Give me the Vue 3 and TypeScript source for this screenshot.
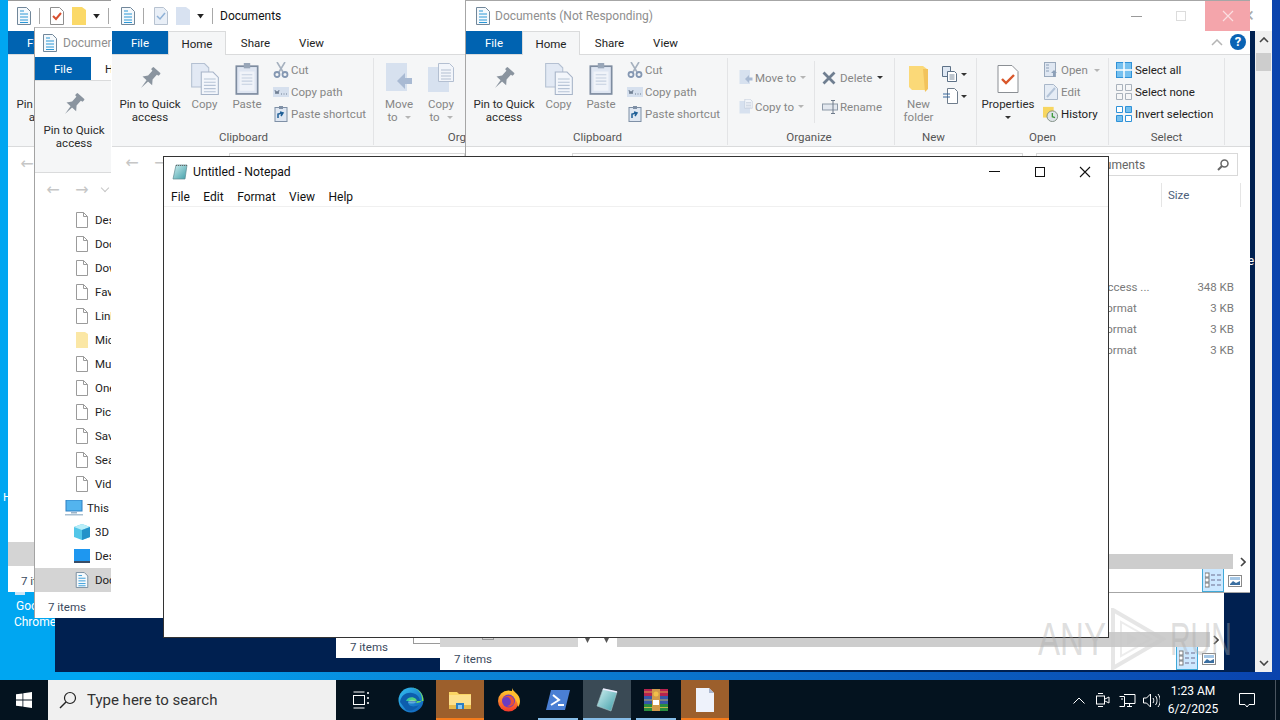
<script setup lang="ts">
type Row = { icon: string; label: string };

const clipRows: Row[] = [
  { icon: 'cut', label: 'Cut' },
  { icon: 'path', label: 'Copy path' },
  { icon: 'shortcut', label: 'Paste shortcut' },
];
const openRows: Row[] = [
  { icon: 'open', label: 'Open' },
  { icon: 'edit', label: 'Edit' },
  { icon: 'history', label: 'History' },
];
const selectRows: Row[] = [
  { icon: 'selall', label: 'Select all' },
  { icon: 'selnone', label: 'Select none' },
  { icon: 'selinv', label: 'Invert selection' },
];
const navRows = [
  { label: 'Desktop', icon: 'page' },
  { label: 'Documents', icon: 'page' },
  { label: 'Downloads', icon: 'page' },
  { label: 'Favorites', icon: 'page' },
  { label: 'Links', icon: 'page' },
  { label: 'Microsoft', icon: 'yellow' },
  { label: 'Music', icon: 'page' },
  { label: 'OneDrive', icon: 'page' },
  { label: 'Pictures', icon: 'page' },
  { label: 'Saved Games', icon: 'page' },
  { label: 'Searches', icon: 'page' },
  { label: 'Videos', icon: 'page' },
];
const files = [
  { type: 'Access ...', size: '348 KB' },
  { type: 'Format', size: '3 KB' },
  { type: 'Format', size: '3 KB' },
  { type: 'Format', size: '3 KB' },
];
const apps = [
  { icon: 'explorer', state: 'open' },
  { icon: 'firefox', state: '' },
  { icon: 'powershell', state: 'run' },
  { icon: 'notepad', state: 'focus' },
  { icon: 'winrar', state: 'run' },
  { icon: 'blank', state: 'open' },
];
</script>

<template>
  <div class="screen">
    <svg class="defs" width="0" height="0" aria-hidden="true">
      <defs>
        <linearGradient id="edgeA" x1="0" y1="0" x2="1" y2="1">
          <stop offset="0" stop-color="#35c1f1" />
          <stop offset="1" stop-color="#0b58b5" />
        </linearGradient>
        <linearGradient id="edgeB" x1="0" y1="0" x2="1" y2="0">
          <stop offset="0" stop-color="#2ec4a0" />
          <stop offset="1" stop-color="#7ee04e" />
        </linearGradient>
        <linearGradient id="fox" x1="0" y1="0" x2="0" y2="1">
          <stop offset="0" stop-color="#ffcb2d" />
          <stop offset="1" stop-color="#f5372c" />
        </linearGradient>
        <linearGradient id="note" x1="0" y1="0" x2="1" y2="1">
          <stop offset="0" stop-color="#cfeff0" />
          <stop offset="1" stop-color="#3f9ea8" />
        </linearGradient>
      </defs>
      <symbol id="docs" viewBox="0 0 16 18">
        <path d="M1.5.5h9l4 4v13h-13z" fill="#f5f9fc" stroke="#71879a" />
        <path d="M4 4h4M4 7h8M4 10h8M4 13h8M4 15.500h8" stroke="#2a97d6" />
      </symbol>
      <symbol id="check" viewBox="0 0 14 18">
        <path d="M.5.500h9l4 4v13H.500z" fill="#fff" stroke="#8f8f8f" />
        <path d="M3 9l3 3 5-6" fill="none" stroke="#d8502f" stroke-width="2" />
      </symbol>
      <symbol id="checkdim" viewBox="0 0 14 18">
        <path d="M.5.500h9l4 4v13H.500z" fill="#e9eff7" stroke="#b7c2d0" />
        <path d="M3 9l3 3 5-6" fill="none" stroke="#8fb1d6" stroke-width="1.500" />
      </symbol>
      <symbol id="folderq" viewBox="0 0 14 18">
        <path d="M0 0h10l4 3v15H0z" fill="#fbd968" />
      </symbol>
      <symbol id="folderdim" viewBox="0 0 14 18">
        <path d="M0 0h10l4 3v15H0z" fill="#d8e2f1" />
      </symbol>
      <symbol id="pin" viewBox="0 0 24 24">
        <g transform="rotate(42 12 12)" fill="#8a949f">
          <rect x="7" y="0" width="10" height="3.500" rx="1" />
          <path d="M9 3h6v7l3.500 4.500h-13L9 10z" />
          <path d="M11 14h2l-1 10z" />
        </g>
      </symbol>
      <symbol id="copy" viewBox="0 0 26 30">
        <path d="M.5.500h12l4 4v18H.500z" fill="#e2e9f4" stroke="#b4c0d2" />
        <path d="M9.500 8.500h11l5 5v16h-16z" fill="#f3f6fb" stroke="#a7b4c8" />
        <path d="M12 15h11M12 18h11M12 21h11M12 24h11M12 27h11" stroke="#b6c3d6" />
      </symbol>
      <symbol id="paste" viewBox="0 0 22 30">
        <rect x="1" y="3" width="20" height="26" fill="#dfe6f2" stroke="#7e8ca0" stroke-width="1.600" />
        <rect x="4" y="8" width="14" height="18" fill="#f0f3f9" />
        <path d="M6 11h10M6 14h10M6 17h10M6 20h10" stroke="#c3cfe0" />
        <rect x="8" y="0" width="6" height="5" fill="#98a6b8" />
      </symbol>
      <symbol id="cut" viewBox="0 0 16 16">
        <path d="M4 0l6 10M12 0L6 10" stroke="#a6b1bf" stroke-width="1.600" fill="none" />
        <circle cx="4" cy="12.500" r="2.500" fill="none" stroke="#8497b2" stroke-width="1.800" />
        <circle cx="12" cy="12.500" r="2.500" fill="none" stroke="#8497b2" stroke-width="1.800" />
      </symbol>
      <symbol id="path" viewBox="0 0 16 16">
        <rect x="0" y="3" width="16" height="10" fill="#d6e0ee" />
        <path d="M2 6l1 4 1-3 1 3 1-4M8 10h1M10.500 10h1M13 10h1" stroke="#6f7e92" fill="none" />
      </symbol>
      <symbol id="shortcut" viewBox="0 0 16 16">
        <rect x="2" y="1.500" width="12" height="14" fill="#dfe7f2" stroke="#7f90a6" />
        <rect x="6" y="0" width="4" height="3" fill="#7f90a6" />
        <path d="M5 12V8l5-1M7 6l3 1-2 3" stroke="#1f5f97" stroke-width="1.500" fill="none" />
      </symbol>
      <symbol id="move" viewBox="0 0 26 32">
        <rect x="0" y="0" width="21" height="28" fill="#d7e1ef" />
        <path d="M26 15H19v-5l-8 8 8 8v-5h7z" fill="#a9bad3" />
      </symbol>
      <symbol id="copyto" viewBox="0 0 26 32">
        <rect x="0" y="4" width="21" height="25" fill="#d7e1ef" />
        <path d="M10.500.5h11l4 4v14h-15z" fill="#f2f5fa" stroke="#b3bfd1" />
        <path d="M13 7h10M13 10h10M13 13h10M13 16h10" stroke="#b3bfd1" />
      </symbol>
      <symbol id="del" viewBox="0 0 14 14">
        <path d="M1.500 1.500l11 11M12.500 1.500l-11 11" stroke="#6f7e90" stroke-width="2.800" />
      </symbol>
      <symbol id="rename" viewBox="0 0 16 14">
        <rect x=".5" y="4" width="15" height="6" fill="#e3e8ef" stroke="#8d99a8" />
        <path d="M11 0v14M9 .5h4M9 13.500h4" stroke="#6e7b8b" />
      </symbol>
      <symbol id="newfolder" viewBox="0 0 20 28">
        <path d="M0 0h14l4 3v21H3l-3-3z" fill="#fbd978" />
        <path d="M14 3l5 0v20l-3 3z" fill="#f2c35c" />
      </symbol>
      <symbol id="newitem" viewBox="0 0 18 16">
        <path d="M.5.500h8v10h-8z" fill="#dfe8f3" stroke="#5d7187" />
        <path d="M5.500 5.500h7l2 2v8h-9z" fill="#fff" stroke="#5d7187" />
        <path d="M7.500 9h5M7.500 11h5M7.500 13h5" stroke="#7b8b9c" />
      </symbol>
      <symbol id="easy" viewBox="0 0 18 16">
        <path d="M5.500.500h7l3 3v12h-10z" fill="#fff" stroke="#6f7d8c" />
        <path d="M1 6h7M1 9h7" stroke="#36679b" />
      </symbol>
      <symbol id="props" viewBox="0 0 22 28">
        <path d="M1 .5h14l6 6v21H1z" fill="#fff" stroke="#8b8f94" />
        <path d="M5 14l4 4 8-8" fill="none" stroke="#d9572a" stroke-width="2.400" />
      </symbol>
      <symbol id="open" viewBox="0 0 14 16">
        <rect x=".5" y=".5" width="11" height="14" fill="#dfe7f2" stroke="#9aa9bc" />
        <path d="M2 3h3M2 6h3M2 9h3" stroke="#8da0b8" />
        <path d="M10 8l3 3h-2v4H9v-4H7z" fill="#8da0b8" />
      </symbol>
      <symbol id="edit" viewBox="0 0 14 16">
        <path d="M.5.5h9l4 4v11H.5z" fill="#e5ecf5" stroke="#a9b7c9" />
        <path d="M3 13L11 4" stroke="#b4c4d8" stroke-width="2" />
      </symbol>
      <symbol id="history" viewBox="0 0 18 18">
        <rect x="0" y="1" width="12" height="12" fill="#f7d661" />
        <circle cx="10.500" cy="11.500" r="6" fill="#dde3e8" stroke="#7b8a7f" />
        <path d="M10.500 8v4l3 1" fill="none" stroke="#3f9a3c" stroke-width="1.500" />
      </symbol>
      <symbol id="selall" viewBox="0 0 16 16">
        <rect x=".5" y=".5" width="15" height="15" fill="#75c0ef" stroke="#2f92d8" />
        <path d="M8 0v16M0 8h16" stroke="#fff" stroke-width="1.500" />
      </symbol>
      <symbol id="selnone" viewBox="0 0 16 16">
        <path d="M.5.5h6v6h-6zM9.500.5h6v6h-6zM.5 9.500h6v6h-6zM9.500 9.500h6v6h-6z" fill="none" stroke="#a9b2bc" />
      </symbol>
      <symbol id="selinv" viewBox="0 0 16 16">
        <path d="M.5.5h6v6h-6zM9.500 9.500h6v6h-6z" fill="#fff" stroke="#2f92d8" />
        <path d="M9.500.5h6v6h-6zM.5 9.500h6v6h-6z" fill="#75c0ef" stroke="#2f92d8" />
      </symbol>
      <symbol id="page" viewBox="0 0 12 16">
        <path d="M.5.5h7l4 4v11H.5z" fill="#fff" stroke="#9b9b9b" />
        <path d="M7.500.5v4h4" fill="none" stroke="#9b9b9b" />
      </symbol>
      <symbol id="yellow" viewBox="0 0 12 16">
        <path d="M0 0h9l3 2v14H0z" fill="#fbe7a5" />
      </symbol>
      <symbol id="pc" viewBox="0 0 18 16">
        <rect x="1" y="0" width="16" height="11" fill="#53b4ee" stroke="#2e7fc1" />
        <rect x="6" y="12" width="6" height="1.500" fill="#9cb4c8" />
        <rect x="0" y="14" width="18" height="1.500" fill="#a9c0d2" />
      </symbol>
      <symbol id="cube" viewBox="0 0 16 16">
        <path d="M8 0l8 3v10l-8 3-8-3V3z" fill="#53c6e8" />
        <path d="M8 0l8 3-8 3-8-3z" fill="#b9eef8" />
        <path d="M8 6l8-3v10l-8 3z" fill="#2492c9" />
      </symbol>
      <symbol id="screenb" viewBox="0 0 16 14">
        <rect x="0" y="0" width="16" height="12" fill="#1e97f0" />
        <rect x="0" y="12" width="16" height="2" fill="#3a4d66" />
      </symbol>
      <symbol id="viewlist" viewBox="0 0 16 16">
        <rect x="0" y="1" width="4" height="4" fill="#fff" stroke="#7a7a7a" />
        <rect x="0" y="6" width="4" height="4" fill="#fff" stroke="#7a7a7a" />
        <rect x="0" y="11" width="4" height="4" fill="#fff" stroke="#7a7a7a" />
        <path d="M6 3h4M12 3h4M6 8h4M12 8h4M6 13h4M12 13h4" stroke="#6f6f8f" />
      </symbol>
      <symbol id="viewpic" viewBox="0 0 14 12">
        <rect x=".5" y=".5" width="13" height="11" fill="#fff" stroke="#8a8a8a" />
        <rect x="2" y="2" width="10" height="3" fill="#a5c7e6" />
        <path d="M2 9l3-3 3 2 4-2v4H2z" fill="#3a6ea0" />
      </symbol>
      <symbol id="edge" viewBox="0 0 26 26">
        <circle cx="13" cy="13" r="12.500" fill="url(#edgeA)" />
        <path d="M2 15C3 8 9 5 14 6c6 1 8 5 8 9h-12c0 4 5 6 11 3-3 5-9 7-13 5" fill="#0d5dad" />
        <path d="M25.500 14c0-8-6-13.500-12.500-13.500C18 1 24 5 24 12c0 3-3 4-6 4 1-1 1-3 0-4-3-3-9-2-10 2h16z" fill="url(#edgeB)" />
        <path d="M10 15c1-3 7-3 8 0-1 2-7 2-8 0z" fill="#fff" opacity=".3" />
      </symbol>
      <symbol id="explorer" viewBox="0 0 24 22">
        <path d="M1 3h8l2 2h12v15H1z" fill="#fbd564" />
        <rect x="1" y="6" width="22" height="12" fill="#fde08c" />
        <rect x="1" y="16" width="22" height="4" fill="#e8b94a" />
        <rect x="8" y="14" width="8" height="6" fill="#2c7fc4" />
        <rect x="10" y="16" width="4" height="4" fill="#8ec7ee" />
      </symbol>
      <symbol id="firefox" viewBox="0 0 24 24">
        <circle cx="11.500" cy="13" r="10.500" fill="url(#fox)" />
        <path d="M15 0c1 4 8 6 8 13 0 3-1 5-2 6 0-5-3-9-6-10z" fill="#ffbd2e" />
        <circle cx="11.500" cy="13" r="6.500" fill="#6a3cc2" />
        <path d="M6 11c3-3 6-2 7 0 2 3 0 7-3 7 4 2 8-2 7-6-1-5-8-6-11-1z" fill="#e8513a" />
      </symbol>
      <symbol id="powershell" viewBox="0 0 24 20">
        <path d="M5 0h19l-5 20H0z" fill="#4a7fd4" />
        <path d="M7 5l6 5-8 5" fill="none" stroke="#fff" stroke-width="2" />
        <path d="M12 15h6" stroke="#fff" stroke-width="2" />
      </symbol>
      <symbol id="notepad" viewBox="0 0 24 24">
        <path d="M8 1l14 3-6 19-14-5z" fill="url(#note)" stroke="#a9c4c8" stroke-width=".6" />
        <path d="M8 1l14 3" stroke="#eef" stroke-width="1.500" />
      </symbol>
      <symbol id="winrar" viewBox="0 0 24 22">
        <rect x="0" y="0" width="24" height="7" fill="#b5234f" />
        <rect x="0" y="7" width="24" height="8" fill="#3657a8" />
        <rect x="0" y="15" width="24" height="7" fill="#2a8d3e" />
        <path d="M0 3h24M0 11h24M0 18.500h24" stroke="#e8c24a" stroke-width=".8" />
        <rect x="8" y="0" width="8" height="22" fill="#d19a4a" />
        <rect x="9" y="11" width="6" height="5" fill="#fff" />
        <circle cx="12" cy="5" r="2.500" fill="#f1c04a" />
      </symbol>
      <symbol id="blank" viewBox="0 0 18 24">
        <path d="M0 0h13l5 5v19H0z" fill="#eef2fb" />
        <path d="M13 0l5 5h-5z" fill="#aab7cf" />
      </symbol>
      <symbol id="notepadsm" viewBox="0 0 16 16">
        <path d="M4 1h11l-2 14H1z" fill="url(#note)" stroke="#5f8a90" stroke-width=".7" />
        <path d="M4 1.500h11" stroke="#666" stroke-dasharray="1 1" />
      </symbol>
    </svg>

    <div class="desktop">
      <span class="desk-h">H</span>
      <div class="desk-icon">
        <div class="desk-chrome"></div>
        <div class="desk-label">Google<br />Chrome</div>
      </div>

      <!-- hung window at the back, only its edges are left -->
      <section class="win win-back">
        <div class="back-title"><span class="back-x">×</span></div>
        <div class="back-body">
          <div class="navy"><span class="navy-e">e</span></div>
          <div class="vscroll">
            <svg class="vs-arrow" viewBox="0 0 10 6"><path d="M1 5l4-4 4 4" fill="none" stroke="#444" stroke-width="1.600" /></svg>
            <div class="vs-thumb"></div>
            <svg class="vs-arrow vs-down" viewBox="0 0 10 6"><path d="M1 1l4 4 4-4" fill="none" stroke="#444" stroke-width="1.600" /></svg>
          </div>
        </div>
      </section>

      <!-- explorer A -->
      <section class="win win-a">
        <div class="title qat">
          <svg class="q-ic"><use href="#docs" /></svg>
          <i class="q-sep"></i>
          <svg class="q-ic q-check"><use href="#check" /></svg>
          <svg class="q-ic q-folder"><use href="#folderq" /></svg>
          <span class="q-caret"></span>
          <i class="q-sep q-sep2"></i>
        </div>
        <div class="tabs"><span class="tab file">File</span></div>
        <div class="ribbon">
          <div class="big pin-btn">
            <svg class="big-ic"><use href="#pin" /></svg>
            <span>Pin to Quick<br />access</span>
          </div>
        </div>
        <div class="navbar"><span class="arrow">←</span></div>
        <div class="sel-row sel-a"></div>
        <div class="status">7 items</div>
      </section>

      <!-- explorer B -->
      <section class="win win-b">
        <div class="title">
          <svg class="q-ic"><use href="#docs" /></svg>
          <span class="title-dim">Documents (Not Responding)</span>
        </div>
        <div class="tabs">
          <span class="tab file">File</span>
          <span class="tab plain">Home</span>
        </div>
        <div class="ribbon">
          <div class="big pin-btn">
            <svg class="big-ic"><use href="#pin" /></svg>
            <span>Pin to Quick<br />access</span>
          </div>
        </div>
        <div class="navbar">
          <span class="arrow">←</span>
          <span class="arrow">→</span>
          <span class="chev"></span>
        </div>
        <div class="tree">
          <div v-for="n in navRows" :key="n.label" class="tree-row">
            <svg class="tree-ic"><use :href="'#' + n.icon" /></svg>
            <span>{{ n.label }}</span>
          </div>
          <div class="tree-row top-level">
            <svg class="pc-ic"><use href="#pc" /></svg>
            <span>This PC</span>
          </div>
          <div class="tree-row">
            <svg class="tree-ic wide"><use href="#cube" /></svg>
            <span>3D Objects</span>
          </div>
          <div class="tree-row">
            <svg class="tree-ic wide"><use href="#screenb" /></svg>
            <span>Desktop</span>
          </div>
          <div class="tree-row selected">
            <svg class="tree-ic wide"><use href="#docs" /></svg>
            <span>Documents</span>
          </div>
        </div>
        <div class="status">7 items</div>
      </section>

      <!-- explorer C -->
      <section class="win win-c">
        <div class="title qat">
          <svg class="q-ic"><use href="#docs" /></svg>
          <i class="q-sep"></i>
          <svg class="q-ic q-check"><use href="#checkdim" /></svg>
          <svg class="q-ic q-folder"><use href="#folderdim" /></svg>
          <span class="q-caret"></span>
          <i class="q-sep q-sep2"></i>
          <span class="title-text">Documents</span>
        </div>
        <div class="tabs">
          <span class="tab file">File</span>
          <span class="tab home">Home</span>
          <span class="tab plain">Share</span>
          <span class="tab plain view">View</span>
        </div>
        <div class="ribbon">
          <div class="group g-clip">
            <div class="group-body">
              <div class="big pin-btn">
                <svg class="big-ic"><use href="#pin" /></svg>
                <span>Pin to Quick<br />access</span>
              </div>
              <div class="big copy-btn dim">
                <svg class="big-ic"><use href="#copy" /></svg>
                <span>Copy</span>
              </div>
              <div class="big paste-btn dim">
                <svg class="big-ic"><use href="#paste" /></svg>
                <span>Paste</span>
              </div>
              <div class="small-col">
                <div v-for="r in clipRows" :key="r.label" class="small-row dim">
                  <svg class="small-ic"><use :href="'#' + r.icon" /></svg>
                  <span>{{ r.label }}</span>
                </div>
              </div>
            </div>
            <div class="group-label">Clipboard</div>
          </div>
          <div class="group g-org-c">
            <div class="group-body">
              <div class="big mv-btn dim">
                <svg class="big-ic"><use href="#move" /></svg>
                <span>Move<br />to <b class="caret pale"></b></span>
              </div>
              <div class="big mv-btn dim">
                <svg class="big-ic"><use href="#copyto" /></svg>
                <span>Copy<br />to <b class="caret pale"></b></span>
              </div>
            </div>
            <div class="group-label">Organize</div>
          </div>
        </div>
        <div class="navbar nav-c">
          <span class="arrow">←</span>
          <span class="arrow">→</span>
          <div class="addr"></div>
        </div>
        <div class="fill"></div>
      </section>
      <div class="c-status">
        <span>7 items</span>
        <i class="c-box"></i>
      </div>

      <!-- explorer D, the front one -->
      <section class="win win-d">
        <div class="title">
          <svg class="q-ic"><use href="#docs" /></svg>
          <span class="title-dim">Documents (Not Responding)</span>
          <div class="win-ctl">
            <span class="ctl"><i class="ctl-min pale-line"></i></span>
            <span class="ctl"><i class="ctl-max pale-box"></i></span>
            <span class="ctl ctl-hot">
              <svg width="12" height="12" viewBox="0 0 12 12"><path d="M1 1l10 10M11 1L1 11" stroke="#fbdfe1" stroke-width="1.200" /></svg>
            </span>
          </div>
        </div>
        <div class="tabs">
          <span class="tab file">File</span>
          <span class="tab home">Home</span>
          <span class="tab plain">Share</span>
          <span class="tab plain view">View</span>
          <svg class="collapse" viewBox="0 0 12 7"><path d="M1 6l5-5 5 5" fill="none" stroke="#b5b5b5" stroke-width="1.500" /></svg>
          <span class="help">?</span>
        </div>
        <div class="ribbon">
          <div class="group g-clip">
            <div class="group-body">
              <div class="big pin-btn">
                <svg class="big-ic"><use href="#pin" /></svg>
                <span>Pin to Quick<br />access</span>
              </div>
              <div class="big copy-btn dim">
                <svg class="big-ic"><use href="#copy" /></svg>
                <span>Copy</span>
              </div>
              <div class="big paste-btn dim">
                <svg class="big-ic"><use href="#paste" /></svg>
                <span>Paste</span>
              </div>
              <div class="small-col">
                <div v-for="r in clipRows" :key="r.label" class="small-row dim">
                  <svg class="small-ic"><use :href="'#' + r.icon" /></svg>
                  <span>{{ r.label }}</span>
                </div>
              </div>
            </div>
            <div class="group-label">Clipboard</div>
          </div>
          <div class="group g-org">
            <div class="group-body">
              <div class="org-col">
                <div class="org-row dim"><svg class="small-ic"><use href="#move" /></svg><span>Move to</span><b class="caret pale"></b></div>
                <div class="org-row dim"><svg class="small-ic"><use href="#copyto" /></svg><span>Copy to</span><b class="caret pale"></b></div>
              </div>
              <div class="org-col org-col2">
                <div class="org-row dim"><svg class="small-ic del-ic"><use href="#del" /></svg><span>Delete</span><b class="caret"></b></div>
                <div class="org-row dim"><svg class="small-ic"><use href="#rename" /></svg><span>Rename</span></div>
              </div>
            </div>
            <div class="group-label">Organize</div>
          </div>
          <div class="group g-new">
            <div class="group-body">
              <div class="big new-btn dim">
                <svg class="big-ic"><use href="#newfolder" /></svg>
                <span>New<br />folder</span>
              </div>
              <div class="new-col">
                <div class="new-row"><svg class="new-ic"><use href="#newitem" /></svg><b class="caret"></b></div>
                <div class="new-row"><svg class="new-ic"><use href="#easy" /></svg><b class="caret"></b></div>
              </div>
            </div>
            <div class="group-label">New</div>
          </div>
          <div class="group g-open">
            <div class="group-body">
              <div class="big prop-btn">
                <svg class="big-ic"><use href="#props" /></svg>
                <span>Properties</span>
                <b class="caret prop-caret"></b>
              </div>
              <div class="small-col open-col">
                <div v-for="(r, i) in openRows" :key="r.label" class="small-row" :class="{ dim: i < 2 }">
                  <svg class="small-ic"><use :href="'#' + r.icon" /></svg>
                  <span>{{ r.label }}</span>
                  <b v-if="i === 0" class="caret pale"></b>
                </div>
              </div>
            </div>
            <div class="group-label">Open</div>
          </div>
          <div class="group g-select">
            <div class="group-body">
              <div class="small-col select-col">
                <div v-for="r in selectRows" :key="r.label" class="small-row">
                  <svg class="small-ic"><use :href="'#' + r.icon" /></svg>
                  <span>{{ r.label }}</span>
                </div>
              </div>
            </div>
            <div class="group-label">Select</div>
          </div>
        </div>
        <div class="navbar nav-d">
          <div class="addr"></div>
          <div class="search">
            <span>Search Documents</span>
            <svg width="14" height="14" viewBox="0 0 14 14"><circle cx="8.500" cy="5.500" r="3.500" fill="none" stroke="#666" stroke-width="1.500" /><path d="M6 8l-4 4" stroke="#666" stroke-width="2" /></svg>
          </div>
        </div>
        <div class="col-head">
          <span class="col-size">Size</span>
        </div>
        <div class="file-list">
          <div v-for="(f, i) in files" :key="i" class="file-row">
            <span class="f-type">{{ f.type }}</span>
            <span class="f-size">{{ f.size }}</span>
          </div>
        </div>
        <div class="hscroll">
          <div class="hbar"></div>
          <svg class="h-arrow" viewBox="0 0 6 10"><path d="M1 1l4 4-4 4" fill="none" stroke="#444" stroke-width="1.600" /></svg>
        </div>
        <div class="win-foot">
          <span class="view-btn on"><svg width="16" height="16"><use href="#viewlist" /></svg></span>
          <span class="view-btn"><svg width="14" height="12"><use href="#viewpic" /></svg></span>
        </div>
      </section>

      <!-- explorer E, only the bottom sticks out below D -->
      <section class="win win-e">
        <div class="fill"></div>
        <div class="e-scroll">
          <div class="e-bar-a"><i class="e-box"></i></div>
          <div class="e-gap"><span class="e-mark"></span><span class="e-mark"></span></div>
          <div class="e-bar-b"></div>
          <svg class="h-arrow" viewBox="0 0 6 10"><path d="M1 1l4 4-4 4" fill="none" stroke="#444" stroke-width="1.600" /></svg>
        </div>
        <div class="e-foot">
          <span class="e-items">7 items</span>
          <span class="view-btn on"><svg width="16" height="16"><use href="#viewlist" /></svg></span>
          <span class="view-btn"><svg width="14" height="12"><use href="#viewpic" /></svg></span>
        </div>
      </section>

      <!-- notepad -->
      <section class="win win-n">
        <div class="n-title">
          <svg class="n-ic"><use href="#notepadsm" /></svg>
          <span>Untitled - Notepad</span>
          <div class="n-ctl">
            <span class="ctl"><i class="ctl-min"></i></span>
            <span class="ctl"><i class="ctl-max"></i></span>
            <span class="ctl">
              <svg width="12" height="12" viewBox="0 0 12 12"><path d="M1 1l10 10M11 1L1 11" stroke="#111" stroke-width="1.100" /></svg>
            </span>
          </div>
        </div>
        <div class="n-menu">
          <span>File</span><span>Edit</span><span>Format</span><span>View</span><span>Help</span>
        </div>
      </section>

      <div class="watermark">
        <span class="wm-text wm-any">ANY</span>
        <svg class="wm-play" width="56" height="62" viewBox="0 0 56 62">
          <path d="M3 2v58l50-29z" fill="none" stroke="#c8c8c8" stroke-width="4" opacity=".45" />
          <path d="M11 14v34l30-17z" fill="none" stroke="#c8c8c8" stroke-width="2" opacity=".35" />
          <path d="M17 25v12l10-6z" fill="#c8c8c8" opacity=".3" />
        </svg>
        <span class="wm-text wm-run">RUN</span>
      </div>
    </div>

    <footer class="taskbar">
      <div class="start">
        <svg width="16" height="16" viewBox="0 0 16 16"><path d="M0 2.300l6.500-.9v6.200H0zM7.300 1.300L16 0v7.600H7.300zM0 8.400h6.500v6.200L0 13.700zM7.300 8.400H16V16l-8.700-1.200z" fill="#fff" /></svg>
      </div>
      <div class="searchbox">
        <svg width="20" height="20" viewBox="0 0 20 20"><circle cx="12" cy="8" r="5.500" fill="none" stroke="#222" stroke-width="1.200" /><path d="M8 12l-6 6" stroke="#222" stroke-width="1.400" /></svg>
        <span>Type here to search</span>
      </div>
      <div class="tb-fixed">
        <svg width="18" height="18" viewBox="0 0 18 18" fill="none" stroke="#fff"><path d="M1.500 1h11M1.500 17h11" /><rect x="1.500" y="4.500" width="11" height="9" /><path d="M16 1v2M16 6v2M16 11v2" stroke-width="1.500" /></svg>
      </div>
      <div class="tb-fixed">
        <svg width="26" height="26"><use href="#edge" /></svg>
      </div>
      <div class="tb-apps">
        <div v-for="a in apps" :key="a.icon" class="tb-app" :class="a.state">
          <svg width="24" height="24"><use :href="'#' + a.icon" /></svg>
        </div>
      </div>
      <div class="tray">
        <span class="tray-ic"><svg width="12" height="7" viewBox="0 0 12 7"><path d="M.5 6.500L6 1l5.500 5.500" fill="none" stroke="#fff" /></svg></span>
        <span class="tray-ic"><svg width="14" height="16" viewBox="0 0 14 16" fill="none" stroke="#fff"><rect x=".5" y="4" width="8" height="8" /><path d="M9 7l4-2v6l-4-2M2 1.500h5M2 14.500h5" /></svg></span>
        <span class="tray-ic"><svg width="17" height="15" viewBox="0 0 17 15" fill="none" stroke="#fff"><path d="M5 1.500h11v9H5M.5 3.500h5v10h-5M2 6h2M8 13.500h5M10.500 10.500v3" /></svg></span>
        <span class="tray-ic"><svg width="17" height="15" viewBox="0 0 17 15" fill="none" stroke="#fff"><path d="M.5 5h3l4-4v13l-4-4h-3zM10 5c1 1.500 1 3.500 0 5M12.500 3c2 2.500 2 6.500 0 9M15 1c3 4 3 9 0 13" /></svg></span>
        <div class="clock">1:23 AM<br />6/2/2025</div>
        <div class="action">
          <svg width="16" height="15" viewBox="0 0 16 15"><path d="M.5.500h15v11H10l-2 2.500-2-2.500H.5z" fill="none" stroke="#fff" /></svg>
        </div>
        <div class="show-desk"></div>
      </div>
    </footer>
  </div>
</template>

<style>
html, body { margin: 0; background: #000; }
</style>

<style scoped>
.screen {
  width: 1280px;
  height: 720px;
  display: flex;
  flex-direction: column;
  overflow: hidden;
  font-family: Roboto, sans-serif;
  font-size: 11.500px;
  color: #222;
}
.defs { position: absolute; }
.desktop {
  position: relative;
  height: 680px;
  overflow: hidden;
  background: linear-gradient(90deg, #00a6f1 0%, #00a6f1 8%, #0a86d8 35%, #0a62c2 70%, #0a43ad 100%);
}
.desk-h {
  position: absolute;
  left: 3px;
  top: 490px;
  color: #fff;
}
.desk-icon {
  position: absolute;
  left: 5px;
  top: 570px;
  width: 60px;
  text-align: center;
  color: #fff;
  line-height: 16px;
  font-size: 12px;
}
.desk-chrome {
  width: 10px;
  height: 25px;
  margin: 0 0 3px 10px;
  background: #cfe6f6;
}

.win {
  position: absolute;
  display: flex;
  flex-direction: column;
  overflow: hidden;
  background: #fff;
  box-sizing: border-box;
}
.win-back { left: 55px; top: 0; width: 1217px; height: 672px; }
.win-a { left: 8px; top: 0; width: 103px; height: 592px; border-top: 1px solid #9a9a9a; }
.win-b { left: 34px; top: 27px; width: 77px; height: 591px; border-left: 1px solid #a3a3a3; border-top: 1px solid #bdbdbd; }
.win-c { left: 111px; top: 0; width: 355px; height: 618px; border-top: 1px solid #fff; border-left: 1px solid #fff; border-right: 1px solid #a6a6a6; }
.win-d { left: 465px; top: 0; width: 785px; height: 593px; border: 1px solid #a6a6a6; border-right: 0; }
.win-e { left: 440px; top: 593px; width: 784px; height: 77px; }
.win-n { left: 163px; top: 156px; width: 946px; height: 482px; border: 1px solid #333; }

.back-title {
  height: 31px;
  position: relative;
}
.back-x {
  position: absolute;
  right: 18px;
  top: 3px;
  font-size: 20px;
  color: #aaa;
}
.back-body {
  flex: 1;
  display: flex;
  min-height: 0;
}
.navy {
  flex: 1;
  position: relative;
  background: #002050;
}
.navy-e {
  position: absolute;
  right: 1px;
  top: 223px;
  color: #fff;
  font-size: 12px;
}
.vscroll {
  width: 17px;
  background: #f0f0f0;
  display: flex;
  flex-direction: column;
  align-items: center;
}
.vs-arrow { width: 10px; height: 6px; margin-top: 6px; flex: none; }
.vs-thumb { width: 15px; height: 18px; margin-top: 10px; background: #cdcdcd; }
.vs-down { margin-top: auto; margin-bottom: 6px; }

.title {
  height: 30px;
  flex: none;
  display: flex;
  align-items: center;
  padding-left: 8px;
  white-space: nowrap;
}
.win-b .title { height: 29px; padding-left: 7px; }
.win-d .title { padding-left: 9px; }
.q-ic { width: 16px; height: 18px; flex: none; }
.q-sep { width: 1px; height: 16px; background: #a8a8a8; margin-left: 7px; flex: none; }
.q-sep2 { margin-left: 8px; }
.q-check { width: 14px; margin-left: 10px; }
.q-folder { width: 14px; margin-left: 8px; }
.q-caret {
  width: 7px;
  height: 4px;
  margin-left: 7px;
  background: #222;
  clip-path: polygon(0 0, 100% 0, 50% 100%);
  border-top: 1px solid #222;
  box-sizing: content-box;
  flex: none;
}
.title-dim { margin-left: 5px; color: #8e8e8e; font-size: 12px; }
.win-d .title-dim { margin-left: 4px; }
.title-text { margin-left: 7px; color: #111; font-size: 12px; }

.tabs {
  height: 24px;
  flex: none;
  display: flex;
  align-items: stretch;
  box-sizing: border-box;
  border-bottom: 1px solid #dadbdc;
  position: relative;
}
.tab {
  flex: none;
  display: flex;
  align-items: center;
  justify-content: center;
  box-sizing: border-box;
}
.tab.file { width: 56px; height: 23px; background: #0063b1; color: #fff; }
.tab.home {
  width: 58px;
  height: 24px;
  background: #f5f6f7;
  border: 1px solid #dadbdc;
  border-bottom: 0;
}
.tab.plain { width: 59px; }
.tab.view { width: 53px; }
.collapse { position: absolute; right: 27px; top: 8px; width: 12px; height: 7px; }
.help {
  position: absolute;
  right: 4px;
  top: 3px;
  width: 16px;
  height: 16px;
  border-radius: 50%;
  background: #0a63b4;
  color: #fff;
  font-weight: 700;
  font-size: 13px;
  line-height: 16px;
  text-align: center;
}

.ribbon {
  height: 92px;
  flex: none;
  display: flex;
  box-sizing: border-box;
  background: #f5f6f7;
  border-bottom: 1px solid #dadbdc;
  white-space: nowrap;
}
.win-a .ribbon > .pin-btn, .win-b .ribbon > .pin-btn { margin-left: 3px; }
.group {
  flex: none;
  display: flex;
  flex-direction: column;
  box-sizing: border-box;
  margin: 3px 0 1px;
  border-right: 1px solid #e3e4e6;
}
.group-body {
  flex: 1;
  display: flex;
  min-height: 0;
}
.group-label {
  height: 15px;
  line-height: 15px;
  text-align: center;
  color: #555;
}
.g-clip { width: 262px; padding-left: 2px; }
.g-org-c { width: 190px; padding-left: 4px; }
.g-org { width: 167px; }
.g-org .group-label, .g-new .group-label { padding-right: 4px; }
.g-new { width: 82px; }
.g-open { width: 132px; }
.g-select { width: 116px; }

.big {
  flex: none;
  display: flex;
  flex-direction: column;
  align-items: center;
  text-align: center;
  line-height: 13px;
  padding-top: 5px;
  box-sizing: border-box;
  color: #2b2b2b;
}
.ribbon > .big { padding-top: 8px; }
.big-ic { width: 30px; height: 32px; margin-bottom: 3px; flex: none; }
.dim { color: #868686; }
.pin-btn { width: 72px; }
.pin-btn .big-ic { width: 26px; height: 24px; margin: 4px 0 7px; transform: translateX(-1px); }
.copy-btn { width: 37px; }
.paste-btn { width: 48px; }
.mv-btn { width: 42px; }
.mv-btn .big-ic { width: 26px; height: 32px; }
.small-col {
  display: flex;
  flex-direction: column;
  padding: 1px 0 0 2px;
}
.small-row {
  height: 22px;
  display: flex;
  align-items: center;
  gap: 2px;
}
.small-ic { width: 16px; height: 16px; flex: none; }
.caret {
  display: inline-block;
  width: 0;
  height: 0;
  margin-left: 4px;
  vertical-align: middle;
  border-left: 3px solid transparent;
  border-right: 3px solid transparent;
  border-top: 3px solid #333;
}
.caret.pale { border-top-color: #b5b5b5; }
.org-col {
  width: 86px;
  padding: 5px 0 0 10px;
  box-sizing: border-box;
}
.org-col2 {
  width: 80px;
  margin-top: 3px;
  padding: 2px 0 0 7px;
  border-left: 1px solid #e3e4e6;
  height: 62px;
}
.org-row {
  height: 29px;
  display: flex;
  align-items: center;
  gap: 1px;
}
.org-col2 .org-row { gap: 2px; }
.org-row .caret { margin-left: 3px; }
.del-ic { width: 14px; height: 14px; margin: 0 2px 0 0; }
.new-btn { width: 47px; }
.new-btn .big-ic { width: 22px; height: 28px; margin: 3px 0 4px; }
.new-col { padding-top: 5px; }
.new-row {
  height: 22px;
  display: flex;
  align-items: center;
}
.new-ic { width: 18px; height: 16px; }
.new-row .caret { margin-left: 1px; }
.prop-btn { width: 62px; }
.prop-btn .big-ic { width: 22px; height: 28px; margin: 2px 0 5px; }
.prop-caret { margin: 5px 0 0; }
.open-col { padding-left: 4px; }
.select-col { padding-left: 7px; }
.select-col .small-row { gap: 3px; }

.navbar {
  height: 32px;
  flex: none;
  display: flex;
  align-items: center;
  padding-left: 10px;
  gap: 13px;
  white-space: nowrap;
  box-sizing: border-box;
}
.arrow {
  color: #c6c6c6;
  font-size: 16px;
  width: 16px;
  flex: none;
  text-align: center;
  font-family: "DejaVu Sans", sans-serif;
}
.chev {
  width: 5px;
  height: 5px;
  border-right: 1px solid #c6c6c6;
  border-bottom: 1px solid #c6c6c6;
  transform: rotate(45deg);
  margin: -3px 0 0 -1px;
  flex: none;
}
.win-a .navbar { padding-left: 11px; }
.nav-c { align-items: flex-start; padding: 6px 0 0 12px; }
.win-c .addr { margin-left: 47px; }
.addr {
  flex: 1;
  height: 22px;
  border: 1px solid #d9d9d9;
  box-sizing: border-box;
}
.nav-d {
  padding: 6px 12px 0 106px;
  align-items: flex-start;
  gap: 13px;
  height: 32px;
}
.search {
  width: 202px;
  height: 23px;
  box-sizing: border-box;
  border: 1px solid #d9d9d9;
  display: flex;
  align-items: center;
  justify-content: space-between;
  padding: 0 7px;
  color: #666;
  font-size: 12px;
}
.col-head {
  display: flex;
  justify-content: flex-end;
  padding-right: 9px;
  margin-top: 4px;
  flex: none;
}
.col-size {
  width: 80px;
  height: 24px;
  line-height: 24px;
  box-sizing: border-box;
  border-left: 1px solid #e5e5e5;
  border-right: 1px solid #e5e5e5;
  padding-left: 6px;
  color: #4c607a;
}
.file-list {
  flex: 1;
  padding-top: 69px;
  min-height: 0;
}
.file-row {
  height: 21px;
  display: flex;
  justify-content: flex-end;
  align-items: center;
  padding-right: 16px;
  color: #7a7a7a;
}
.f-type { flex: 1; padding-left: 634px; }
.f-size { width: 60px; text-align: right; }
.hscroll {
  height: 15px;
  flex: none;
  display: flex;
  align-items: center;
  padding-right: 4px;
}
.hbar { flex: 1; height: 15px; background: #cdcdcd; margin-right: 7px; }
.h-arrow { width: 6px; height: 10px; flex: none; }
.win-foot, .e-foot {
  flex: none;
  display: flex;
  align-items: stretch;
  background: #fff;
}
.win-foot {
  height: 23px;
  justify-content: flex-end;
  padding-right: 4px;
}
.view-btn {
  width: 22px;
  display: flex;
  align-items: center;
  justify-content: center;
  box-sizing: border-box;
}
.view-btn.on {
  background: #cce8ff;
  border: 1px solid #3fa9d8;
  border-width: 0 1px 1px;
}

.sel-a {
  margin-top: auto;
  height: 24px;
  background: #d4d4d4;
  flex: none;
}
.status {
  height: 26px;
  flex: none;
  display: flex;
  align-items: center;
  padding: 3px 0 0 13px;
  box-sizing: border-box;
  color: #3b4a5e;
  white-space: nowrap;
}

.tree {
  flex: 1;
  padding-top: 3px;
  min-height: 0;
  white-space: nowrap;
}
.tree-row {
  height: 24px;
  display: flex;
  align-items: center;
  gap: 7px;
  padding-left: 41px;
}
.tree-row.top-level { padding-left: 30px; gap: 4px; }
.tree-row.selected { background: #d4d4d4; }
.tree-ic { width: 12px; height: 16px; flex: none; }
.tree-ic.wide { width: 16px; margin: 0 -2px 0 -2px; }
.pc-ic { width: 18px; height: 16px; flex: none; }

.c-status {
  position: absolute;
  left: 336px;
  top: 630px;
  width: 104px;
  height: 28px;
  background: #fff;
  display: flex;
  align-items: flex-end;
  padding: 0 0 4px 14px;
  box-sizing: border-box;
  color: #3b4a5e;
}
.c-box {
  position: absolute;
  right: 0;
  top: 0;
  width: 27px;
  height: 14px;
  box-sizing: border-box;
  border: 1px solid #9a9a9a;
  border-right: 0;
}
.fill { flex: 1; }

.win-ctl, .n-ctl {
  margin-left: auto;
  display: flex;
  align-self: stretch;
}
.ctl {
  width: 45px;
  display: flex;
  align-items: center;
  justify-content: center;
}
.ctl-hot { background: #f4a5ab; }
.ctl-min { width: 11px; height: 1px; background: #111; }
.ctl-max { width: 10px; height: 10px; border: 1px solid #111; box-sizing: border-box; }
.pale-line { background: #9a9a9a; margin-right: 3px; }
.pale-box { border-color: #dcdcdc; margin-right: 3px; }

.e-scroll {
  height: 15px;
  flex: none;
  display: flex;
  align-items: stretch;
  padding-right: 5px;
}
.e-bar-a { width: 138px; background: #d4d4d4; position: relative; }
.e-box {
  position: absolute;
  left: 42px;
  top: 0;
  width: 12px;
  height: 8px;
  box-sizing: border-box;
  border: 1px solid #999;
}
.e-gap { width: 39px; display: flex; gap: 12px; padding: 4px 0 0 6px; box-sizing: border-box; }
.e-mark {
  width: 7px;
  height: 7px;
  background: #555;
  clip-path: polygon(0 0, 100% 0, 50% 100%);
}
.e-bar-b { flex: 1; background: #cdcdcd; margin-right: 3px; }
.e-scroll .h-arrow { align-self: center; }
.e-foot { height: 23px; }
.e-items { padding: 0 0 0 14px; margin-right: auto; line-height: 24px; color: #3b4a5e; }
.e-foot .view-btn:last-child { margin-right: 4px; }

.n-title {
  height: 29px;
  flex: none;
  display: flex;
  align-items: center;
  padding-left: 8px;
  font-size: 12.200px;
  color: #111;
}
.n-ic { width: 16px; height: 16px; margin-right: 5px; }
.n-menu {
  height: 21px;
  flex: none;
  display: flex;
  align-items: center;
  gap: 13.500px;
  padding: 1px 0 0 7px;
  box-sizing: border-box;
  border-bottom: 1px solid #f0f0f0;
  color: #111;
  font-size: 12px;
}
.n-ctl { height: 29px; padding-right: 1px; }

.watermark {
  position: absolute;
  left: 1038px;
  top: 608px;
  display: flex;
  align-items: center;
  gap: 6px;
  pointer-events: none;
}
.wm-text {
  font-family: "Liberation Sans", sans-serif;
  font-size: 46px;
  line-height: 62px;
  color: rgba(170, 170, 170, 0.38);
  width: 66px;
  display: inline-block;
  transform: scaleX(0.72);
  transform-origin: left center;
  white-space: nowrap;
}
.wm-run { margin-left: -2px; transform: scaleX(0.62); }

.taskbar {
  height: 40px;
  flex: none;
  display: flex;
  align-items: stretch;
  background: #04131f;
  color: #fff;
}
.start {
  width: 48px;
  display: flex;
  align-items: center;
  justify-content: center;
}
.searchbox {
  width: 288px;
  display: flex;
  align-items: center;
  gap: 9px;
  padding-left: 10px;
  box-sizing: border-box;
  background: #f0f0f0;
  color: #333;
  font-size: 15px;
}
.tb-fixed {
  width: 50px;
  display: flex;
  align-items: center;
  justify-content: center;
}
.tb-apps {
  display: flex;
  gap: 1px;
}
.tb-app {
  width: 48px;
  position: relative;
  display: flex;
  align-items: center;
  justify-content: center;
}
.tb-app.open { background: #9c5f2c; }
.tb-app.focus { background: #3a4a55; }
.tb-app.open::after, .tb-app.focus::after, .tb-app.run::after {
  content: "";
  position: absolute;
  left: 0;
  right: 0;
  bottom: 0;
  height: 2px;
  background: #f47b1c;
}
.tb-app.focus::after { background: #86bde8; }
.tb-app.run::after { left: 4px; right: 4px; background: #86bde8; }
.tray {
  margin-left: auto;
  display: flex;
  align-items: stretch;
}
.tray-ic {
  width: 24px;
  display: flex;
  align-items: center;
  justify-content: center;
}
.clock {
  width: 60px;
  text-align: center;
  font-size: 12px;
  line-height: 18px;
  padding-top: 2px;
  white-space: nowrap;
}
.action {
  width: 48px;
  display: flex;
  align-items: center;
  justify-content: center;
}
.show-desk {
  width: 9px;
  box-sizing: border-box;
  border-left: 4px solid #04131f;
  position: relative;
}
.show-desk::before {
  content: "";
  position: absolute;
  left: 0;
  top: 0;
  bottom: 0;
  width: 1px;
  background: #4a5560;
}
</style>
